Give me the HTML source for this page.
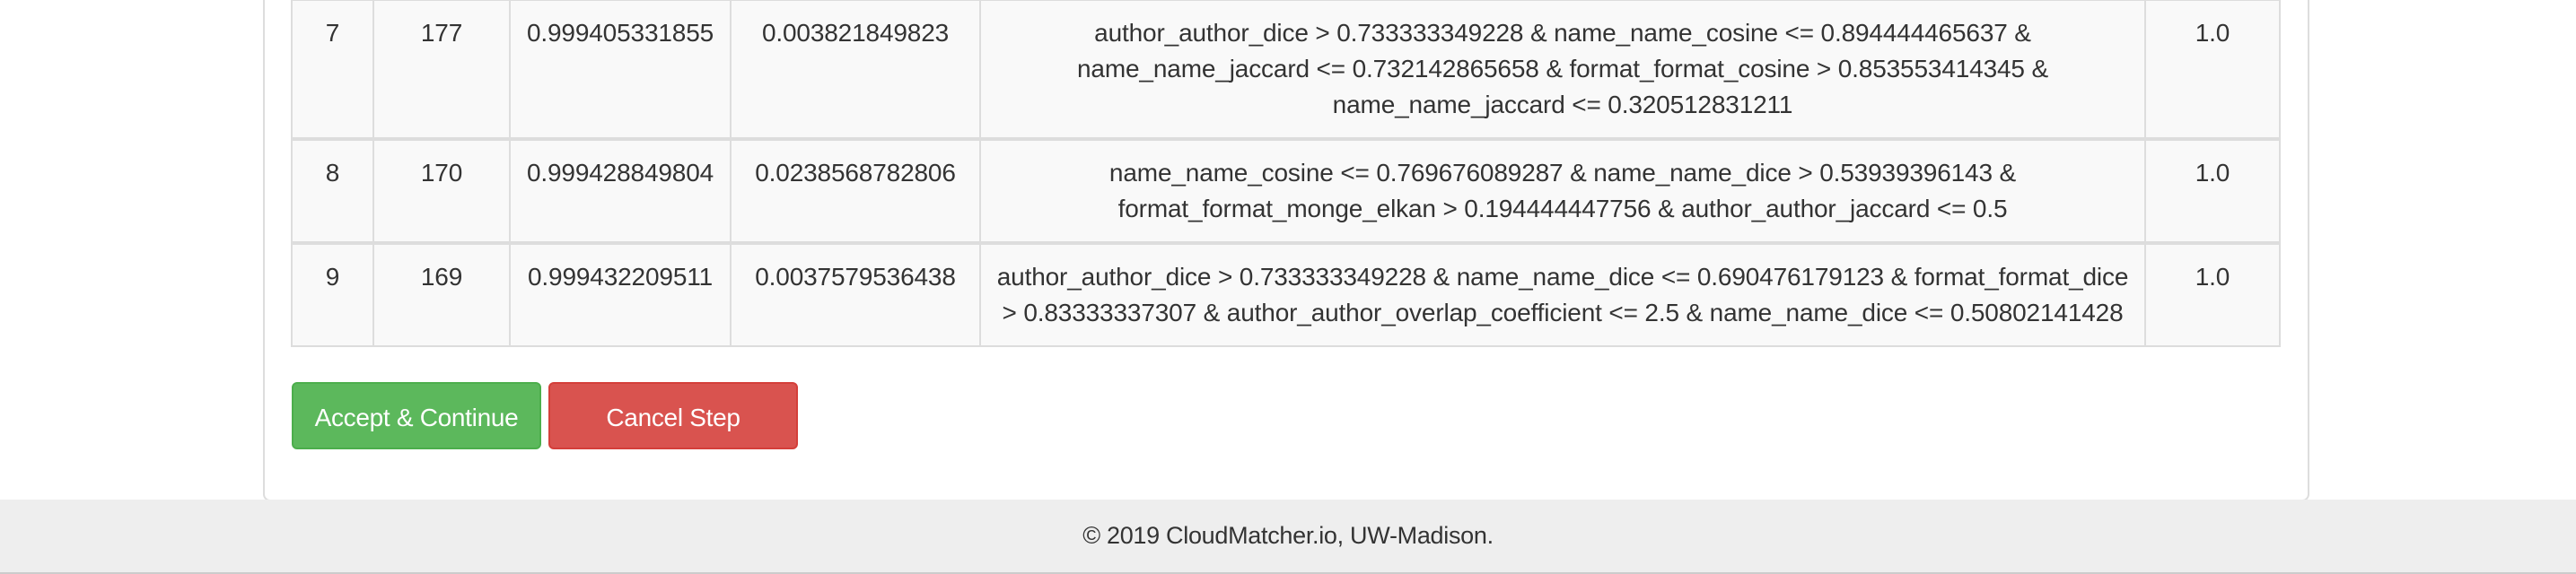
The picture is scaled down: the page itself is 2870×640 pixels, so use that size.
<!DOCTYPE html>
<html><head><meta charset="utf-8"><style>
html,body{margin:0;padding:0;width:2870px;height:640px;overflow:hidden;background:#fff;font-family:"Liberation Sans",Arial,sans-serif;color:#333;}
.card{position:absolute;left:293px;top:-10px;width:2276px;height:565px;border:2px solid #ddd;border-radius:8px;background:#fff;}
table{position:absolute;left:324px;top:-1px;border-collapse:collapse;font-size:28px;line-height:40px;letter-spacing:-0.15px;}
td{border:2px solid #ddd;background:#f9f9f9;text-align:center;vertical-align:top;padding:16px 8px;white-space:nowrap;}
tr+tr td{border-top:4px solid #ddd;}
.btn{position:absolute;top:426px;height:75px;border-radius:6px;color:#fff;font-size:28px;line-height:75px;text-align:center;box-sizing:border-box;letter-spacing:-0.3px;}
.g{left:325px;width:278px;background:#5cb85c;border:2px solid #4cae4c;}
.r{left:611px;width:278px;background:#d9534f;border:2px solid #d43f3a;}
.foot{position:absolute;left:0;top:557px;width:2870px;height:81px;background:#eee;border-bottom:2px solid #ccc;text-align:center;font-size:27px;line-height:80px;color:#333;letter-spacing:-0.3px;}
</style></head><body>
<div class="card"></div>
<table>
<colgroup><col style="width:91px"><col style="width:152px"><col style="width:246px"><col style="width:278px"><col style="width:1298px"><col style="width:150px"></colgroup>
<tr style="height:153px"><td>7</td><td>177</td><td>0.999405331855</td><td>0.003821849823</td><td>author_author_dice &gt; 0.733333349228 &amp; name_name_cosine &lt;= 0.894444465637 &amp;<br>name_name_jaccard &lt;= 0.732142865658 &amp; format_format_cosine &gt; 0.853553414345 &amp;<br>name_name_jaccard &lt;= 0.320512831211</td><td>1.0</td></tr>
<tr style="height:116px"><td>8</td><td>170</td><td>0.999428849804</td><td>0.0238568782806</td><td>name_name_cosine &lt;= 0.769676089287 &amp; name_name_dice &gt; 0.53939396143 &amp;<br>format_format_monge_elkan &gt; 0.194444447756 &amp; author_author_jaccard &lt;= 0.5</td><td>1.0</td></tr>
<tr style="height:115px"><td>9</td><td>169</td><td>0.999432209511</td><td>0.0037579536438</td><td>author_author_dice &gt; 0.733333349228 &amp; name_name_dice &lt;= 0.690476179123 &amp; format_format_dice<br>&gt; 0.83333337307 &amp; author_author_overlap_coefficient &lt;= 2.5 &amp; name_name_dice &lt;= 0.50802141428</td><td>1.0</td></tr>
</table>
<div class="btn g">Accept &amp; Continue</div>
<div class="btn r">Cancel Step</div>
<div class="foot">© 2019 CloudMatcher.io, UW-Madison.</div>
</body></html>
